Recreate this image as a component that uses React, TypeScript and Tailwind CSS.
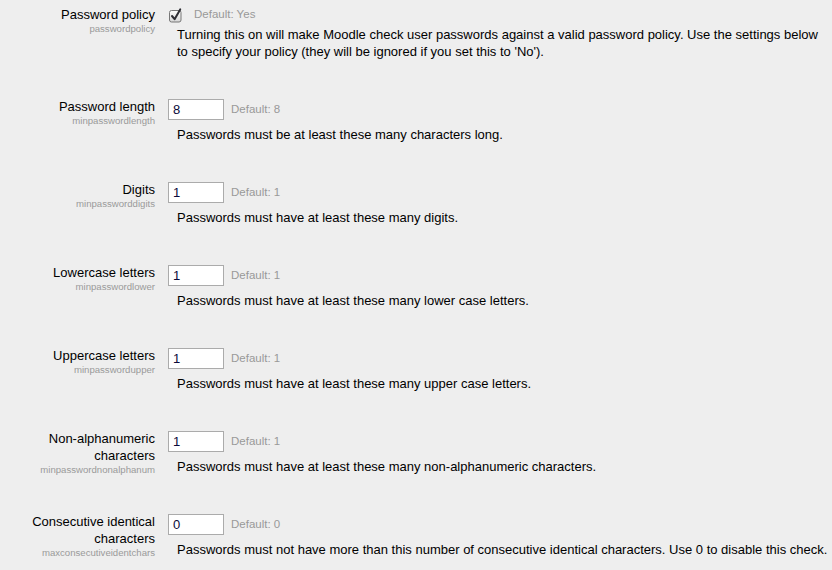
import React from 'react';

interface Setting {
    label: string[];
    name: string;
    value: string;
    fallback: string;
    help: string;
}

const settings: Setting[] = [
    {
        label: ['Password length'],
        name: 'minpasswordlength',
        value: '8',
        fallback: '8',
        help: 'Passwords must be at least these many characters long.',
    },
    {
        label: ['Digits'],
        name: 'minpassworddigits',
        value: '1',
        fallback: '1',
        help: 'Passwords must have at least these many digits.',
    },
    {
        label: ['Lowercase letters'],
        name: 'minpasswordlower',
        value: '1',
        fallback: '1',
        help: 'Passwords must have at least these many lower case letters.',
    },
    {
        label: ['Uppercase letters'],
        name: 'minpasswordupper',
        value: '1',
        fallback: '1',
        help: 'Passwords must have at least these many upper case letters.',
    },
    {
        label: ['Non-alphanumeric', 'characters'],
        name: 'minpasswordnonalphanum',
        value: '1',
        fallback: '1',
        help: 'Passwords must have at least these many non-alphanumeric characters.',
    },
    {
        label: ['Consecutive identical', 'characters'],
        name: 'maxconsecutiveidentchars',
        value: '0',
        fallback: '0',
        help: 'Passwords must not have more than this number of consecutive identical characters. Use 0 to disable this check.',
    },
];

function Checkbox() {
    return (
        <svg width="14" height="16" viewBox="0 0 14 16" className="shrink-0">
            <defs>
                <linearGradient id="cb" x1="0" y1="0" x2="0" y2="1">
                    <stop offset="0" stopColor="#fdfdfd" />
                    <stop offset="1" stopColor="#d6d6d6" />
                </linearGradient>
            </defs>
            <rect x="1.5" y="3.5" width="11.5" height="11.5" rx="2" fill="url(#cb)" stroke="#777777" />
            <path d="M4 9 L6.6 12.2 L12.2 2.4" fill="none" stroke="#2e2e34" strokeWidth="2" strokeLinecap="round" strokeLinejoin="round" />
        </svg>
    );
}

function Label({ lines, name }: { lines: string[]; name: string }) {
    return (
        <div className="w-[155px] shrink-0 text-right">
            {lines.map((line) => (
                <div key={line} className="text-[13px] leading-[17px] text-black">{line}</div>
            ))}
            <div className="text-[9.6px] leading-[11px] text-[#9a9a9a]">{name}</div>
        </div>
    );
}

export default function App() {
    return (
        <div
            className="w-[832px] h-[570px] overflow-hidden bg-[#eeeeee] pt-[6px]"
            style={{ fontFamily: '"Liberation Sans", Arial, sans-serif' }}
        >
            <div className="flex flex-col gap-[38px]">
                {/* Password policy */}
                <div className="flex">
                    <Label lines={['Password policy']} name="passwordpolicy" />
                    <div className="ml-[13px] flex flex-col">
                        <div className="flex items-center h-[17px]">
                            <Checkbox />
                            <span className="ml-[12px] text-[11.5px] text-[#999999]">Default: Yes</span>
                        </div>
                        <p className="mt-[3px] pl-[9px] w-[664px] text-[13px] leading-[17px] text-black">
                            Turning this on will make Moodle check user passwords against a valid password policy. Use the settings below to specify your policy (they will be ignored if you set this to 'No').
                        </p>
                    </div>
                </div>

                {settings.map((s) => (
                    <div key={s.name} className="flex">
                        <Label lines={s.label} name={s.name} />
                        <div className="ml-[13px] flex flex-col">
                            <div className="flex items-center mt-[1px]">
                                <input
                                    type="text"
                                    defaultValue={s.value}
                                    className="w-[56px] h-[21px] border border-[#ababab] bg-white px-[4px] text-[13px] text-[#0a0a3a] outline-none"
                                    style={{ fontFamily: '"Liberation Sans", Arial, sans-serif' }}
                                />
                                <span className="ml-[7px] text-[11.5px] text-[#999999]">Default: {s.fallback}</span>
                            </div>
                            <p className="mt-[6px] pl-[9px] w-[664px] text-[13px] leading-[17px] text-black">{s.help}</p>
                        </div>
                    </div>
                ))}
            </div>
        </div>
    );
}
